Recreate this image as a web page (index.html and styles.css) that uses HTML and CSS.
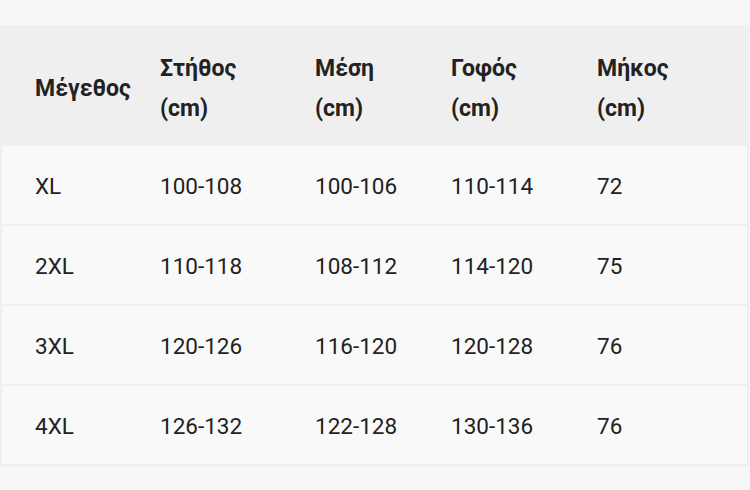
FILE: index.html
```html
<!DOCTYPE html>
<html lang="el">
<head>
<meta charset="utf-8">
<link rel="stylesheet" href="styles.css">
</head>
<body>
<div class="size-table">
  <div class="row head">
    <div class="cell"><span>Μέγεθος</span></div>
    <div class="cell"><span>Στήθος</span><span>(cm)</span></div>
    <div class="cell"><span>Μέση</span><span>(cm)</span></div>
    <div class="cell"><span>Γοφός</span><span>(cm)</span></div>
    <div class="cell"><span>Μήκος</span><span>(cm)</span></div>
  </div>
  <div class="row">
    <div class="cell">XL</div><div class="cell">100-108</div><div class="cell">100-106</div><div class="cell">110-114</div><div class="cell">72</div>
  </div>
  <div class="row">
    <div class="cell">2XL</div><div class="cell">110-118</div><div class="cell">108-112</div><div class="cell">114-120</div><div class="cell">75</div>
  </div>
  <div class="row">
    <div class="cell">3XL</div><div class="cell">120-126</div><div class="cell">116-120</div><div class="cell">120-128</div><div class="cell">76</div>
  </div>
  <div class="row">
    <div class="cell">4XL</div><div class="cell">126-132</div><div class="cell">122-128</div><div class="cell">130-136</div><div class="cell">76</div>
  </div>
</div>
</body>
</html>
```

FILE: styles.css
```css
html, body {
  margin: 0;
  padding: 0;
  background: #f7f7f7;
}
body {
  font-family: Roboto, "Noto Sans", sans-serif;
  color: #222;
  font-size: 22.5px;
}
.size-table {
  margin-top: 25px;
  width: 749px;
  box-sizing: border-box;
}
.row {
  display: grid;
  grid-template-columns: 158px 155px 136px 146px 1fr;
  height: 80px;
  align-items: center;
  background: #f9f9f9;
  border-left: 2px solid #efefef;
  border-right: 2px solid #efefef;
  border-bottom: 2px solid #efefef;
  box-sizing: border-box;
  padding-top: 2px;
}
.row .cell:first-child {
  padding-left: 33px;
}
.row.head {
  grid-template-columns: 160px 155px 136px 146px 1fr;
  height: 121px;
  background: #efefef;
  border: none;
  font-weight: bold;
  font-size: 23px;
  padding-top: 6px;
  box-sizing: border-box;
}
.row.head .cell:first-child {
  padding-left: 35px;
}
.row.head .cell {
  display: flex;
  flex-direction: column;
  line-height: 40px;
}
.cell {
  white-space: nowrap;
}
```
